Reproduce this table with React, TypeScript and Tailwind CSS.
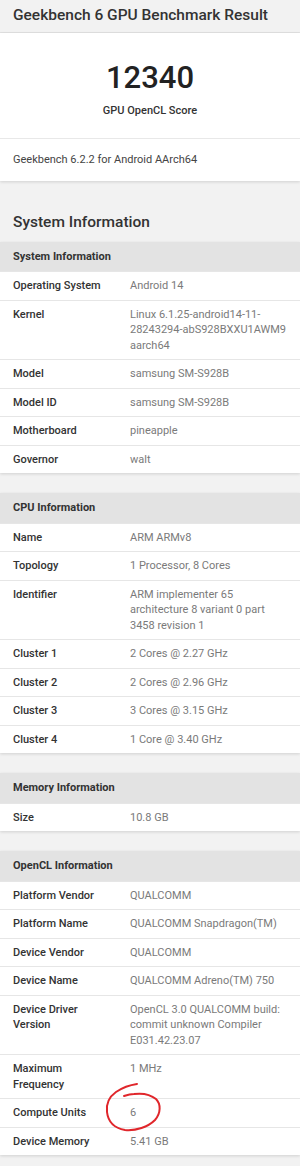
import React from 'react';

type Row = { label: string; value: string };
type Section = { title: string; rows: Row[] };

const sections: Section[] = [
  {
    title: 'System Information',
    rows: [
      { label: 'Operating System', value: 'Android 14' },
      { label: 'Kernel', value: 'Linux 6.1.25-android14-11-28243294-abS928BXXU1AWM9 aarch64' },
      { label: 'Model', value: 'samsung SM-S928B' },
      { label: 'Model ID', value: 'samsung SM-S928B' },
      { label: 'Motherboard', value: 'pineapple' },
      { label: 'Governor', value: 'walt' },
    ],
  },
  {
    title: 'CPU Information',
    rows: [
      { label: 'Name', value: 'ARM ARMv8' },
      { label: 'Topology', value: '1 Processor, 8 Cores' },
      { label: 'Identifier', value: 'ARM implementer 65 architecture 8 variant 0 part 3458 revision 1' },
      { label: 'Cluster 1', value: '2 Cores @ 2.27 GHz' },
      { label: 'Cluster 2', value: '2 Cores @ 2.96 GHz' },
      { label: 'Cluster 3', value: '3 Cores @ 3.15 GHz' },
      { label: 'Cluster 4', value: '1 Core @ 3.40 GHz' },
    ],
  },
  {
    title: 'Memory Information',
    rows: [{ label: 'Size', value: '10.8 GB' }],
  },
  {
    title: 'OpenCL Information',
    rows: [
      { label: 'Platform Vendor', value: 'QUALCOMM' },
      { label: 'Platform Name', value: 'QUALCOMM Snapdragon(TM)' },
      { label: 'Device Vendor', value: 'QUALCOMM' },
      { label: 'Device Name', value: 'QUALCOMM Adreno(TM) 750' },
      { label: 'Device Driver Version', value: 'OpenCL 3.0 QUALCOMM build: commit unknown Compiler E031.42.23.07' },
      { label: 'Maximum Frequency', value: '1 MHz' },
      { label: 'Compute Units', value: '6' },
      { label: 'Device Memory', value: '5.41 GB' },
    ],
  },
];

// hand-drawn red ring around the compute units value
const Scribble = () => (
  <svg
    className="pointer-events-none absolute left-[-30px] top-[-23px] h-[52px] w-[66px]"
    viewBox="0 0 66 52"
    fill="none"
  >
    <path
      d="M37 2 C30 3 22 6 16 10 C9 15 6 22 7 30 C8 39 14 46 25 48 C36 49 48 45 55 38 C61 31 61 22 56 17 C50 12 42 11 34 12 C30 12 27 13 24 14"
      stroke="#e0262b"
      strokeWidth="2"
      strokeLinecap="round"
    />
  </svg>
);

const InfoTable = ({ section }: { section: Section }) => (
  <div className="bg-white shadow-[0_1px_3px_rgba(0,0,0,0.14)]">
    <div className="bg-[#e3e3e3] px-[13px] py-[7px] text-[11px] font-bold leading-[15.5px] text-[#333]">
      {section.title}
    </div>
    {section.rows.map((row) => (
      <div key={row.label} className="flex border-t border-[#e6e6e6] px-[13px] py-[6px] text-[11px] leading-[15.5px]">
        <div className="w-[117px] shrink-0 pr-[28.5px] font-medium text-[#333]">{row.label}</div>
        <div className="relative flex-1 text-[#7a7a7a]">
          {row.value}
          {row.label === 'Compute Units' && <Scribble />}
        </div>
      </div>
    ))}
  </div>
);

export default function App() {
  return (
    <div className="min-h-[1166px] w-[300px] bg-[#f2f2f2] pb-[11px] font-['Roboto',sans-serif]">
      <div className="flex h-[33px] items-center border-b border-[#e2e2e2] px-[13px] text-[15.5px] font-medium text-[#333]">
        Geekbench 6 GPU Benchmark Result
      </div>

      <div className="bg-white shadow-[0_1px_3px_rgba(0,0,0,0.14)]">
        <div className="flex flex-col items-center border-b border-[#e8e8e8] pb-[19px] pt-[25.5px]">
          <div className="text-[31px] font-medium leading-[38px] text-[#222]">12340</div>
          <div className="mt-[6px] text-[11px] font-medium leading-[16px] text-[#333]">GPU OpenCL Score</div>
        </div>
        <div className="px-[13px] py-[13px] text-[11px] leading-[16px] text-[#444]">
          Geekbench 6.2.2 for Android AArch64
        </div>
      </div>

      <h2 className="mb-[9px] mt-[30px] px-[13px] text-[15.5px] font-medium leading-[22px] text-[#333]">
        System Information
      </h2>

      <div className="flex flex-col gap-[20px]">
        {sections.map((s) => (
          <InfoTable key={s.title} section={s} />
        ))}
      </div>
    </div>
  );
}
